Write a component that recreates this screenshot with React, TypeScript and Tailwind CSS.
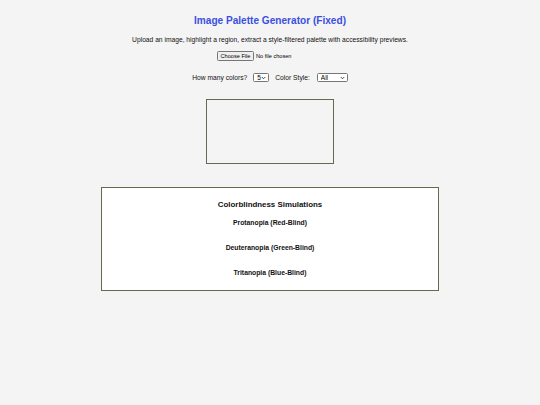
import React, { useState } from 'react';

// 画像パレット生成ページ（縮小表示版）

const Chevron = () => (
  <svg
    className="pointer-events-none absolute right-[3px] top-1/2 h-[4px] w-[5px] -translate-y-1/2"
    viewBox="0 0 10 8"
    fill="none"
    stroke="#333"
    strokeWidth={1.8}
  >
    <path d="M1.5 2l3.5 3.5L8.5 2" />
  </svg>
);

interface SmallSelectProps {
  value: string;
  options: string[];
  width: string;
  onChange: (v: string) => void;
}

const SmallSelect: React.FC<SmallSelectProps> = ({ value, options, width, onChange }) => (
  <span className={`relative inline-block ${width}`}>
    <select
      value={value}
      onChange={(e) => onChange(e.target.value)}
      className="h-[9px] w-full appearance-none rounded-[1.5px] border border-[#767676] bg-white pl-[3px] text-[6.5px] leading-[7px] text-black outline-none"
    >
      {options.map((o) => (
        <option key={o}>{o}</option>
      ))}
    </select>
    <Chevron />
  </span>
);

const simulations = ['Protanopia (Red-Blind)', 'Deuteranopia (Green-Blind)', 'Tritanopia (Blue-Blind)'];

export default function App() {
  const [count, setCount] = useState('5');
  const [style, setStyle] = useState('All');

  return (
    <div className="min-h-[405px] w-full bg-[#f4f4f4] font-['Liberation_Sans',Arial,sans-serif] text-black">
      <div className="flex flex-col items-center pt-[15px]">
        <h1 className="text-[10.1px] font-bold leading-[12px] text-[#3b4fe0]">Image Palette Generator (Fixed)</h1>

        <p className="mt-[9px] text-[6.7px] leading-[8px] text-[#111]">
          Upload an image, highlight a region, extract a style-filtered palette with accessibility previews.
        </p>

        {/* ファイル選択（ネイティブ入力と同じ固定幅） */}
        <label className="mt-[7px] flex w-[106px] items-center gap-[2px]">
          <span className="flex h-[10px] w-[37px] items-center justify-center rounded-[1.5px] border border-[#767676] bg-[#efefef] text-[5.6px] text-black">
            Choose File
          </span>
          <span className="text-[5.6px] text-black">No file chosen</span>
          <input type="file" className="hidden" />
        </label>

        {/* 設定 */}
        <div className="mt-[12px] flex items-center text-[6.7px] leading-[9px] text-[#111]">
          <span>How many colors?</span>
          <span className="ml-[6px]">
            <SmallSelect value={count} options={['3', '4', '5', '6', '8', '10']} width="w-[16px]" onChange={setCount} />
          </span>
          <span className="ml-[6px]">Color Style:</span>
          <span className="ml-[7px]">
            <SmallSelect value={style} options={['All', 'Pastel', 'Vivid', 'Muted', 'Dark']} width="w-[31px]" onChange={setStyle} />
          </span>
        </div>

        {/* キャンバス */}
        <div className="mt-[17px] h-[65px] w-[128px] border border-[#66694f]" />

        {/* 色覚シミュレーション */}
        <div className="mt-[23px] flex h-[104px] w-[338px] flex-col items-center border border-[#66694f] bg-white pt-[12px]">
          <h3 className="text-[7.9px] font-bold leading-[10px] text-[#111]">Colorblindness Simulations</h3>
          <div className="mt-[8px] flex flex-col items-center gap-[16px]">
            {simulations.map((s) => (
              <h4 key={s} className="text-[6.8px] font-bold leading-[9px] text-[#111]">
                {s}
              </h4>
            ))}
          </div>
        </div>
      </div>
    </div>
  );
}
